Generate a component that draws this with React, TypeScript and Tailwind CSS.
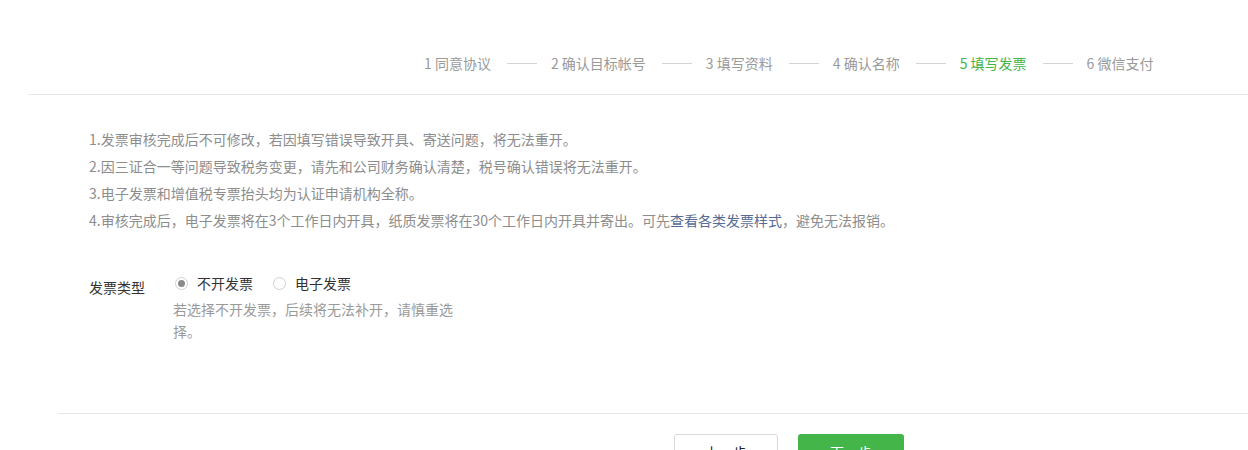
import React from "react";

const steps = [
  { n: 1, t: "同意协议" },
  { n: 2, t: "确认目标帐号" },
  { n: 3, t: "填写资料" },
  { n: 4, t: "确认名称" },
  { n: 5, t: "填写发票", active: true },
  { n: 6, t: "微信支付" },
];

function Radio({ checked, label }: { checked?: boolean; label: string }) {
  return (
    <label className="flex items-center">
      <span className="w-[13px] h-[13px] rounded-full border border-[#d0d0d0] bg-white flex items-center justify-center">
        {checked && <span className="w-[7px] h-[7px] rounded-full bg-[#8a8a8a]" />}
      </span>
      <span className="ml-[9px] text-[#333]">{label}</span>
    </label>
  );
}

export default function App() {
  return (
    <div
      className="w-[1248px] h-[450px] overflow-hidden bg-white text-[14px]"
      style={{ fontFamily: '"Noto Sans CJK SC", "Liberation Sans", sans-serif' }}
    >
      <div className="pl-[28px]">
        <div className="h-[95px] border-b border-[#e7e7eb] pl-[396px] pt-[53px]">
          <div className="flex items-center leading-[20px]">
            {steps.map((s, i) => (
              <div key={s.n} className="flex items-center">
                <span className={s.active ? "text-[#44b549]" : "text-[#9a9a9a]"}>
                  {s.n} {s.t}
                </span>
                {i < steps.length - 1 && (
                  <span className="ml-[16px] mr-[14px] w-[30px] h-px bg-[#d5d5d5]" />
                )}
              </div>
            ))}
          </div>
        </div>
      </div>

      <div className="pl-[89px] pt-[31px] text-[#8d8d8d] leading-[27px]">
        <p>1.发票审核完成后不可修改，若因填写错误导致开具、寄送问题，将无法重开。</p>
        <p>2.因三证合一等问题导致税务变更，请先和公司财务确认清楚，税号确认错误将无法重开。</p>
        <p>3.电子发票和增值税专票抬头均为认证申请机构全称。</p>
        <p>
          4.审核完成后，电子发票将在3个工作日内开具，纸质发票将在30个工作日内开具并寄出。可先
          <a className="text-[#576b95]">查看各类发票样式</a>，避免无法报销。
        </p>
      </div>

      <div className="pl-[89px] mt-[38px] flex leading-[22px]">
        <div className="w-[84px] pt-[4px] text-[#333]">发票类型</div>
        <div>
          <div className="flex items-center gap-[20px] pl-[2px]">
            <Radio checked label="不开发票" />
            <Radio label="电子发票" />
          </div>
          <p className="mt-[4px] w-[284px] text-[#9a9a9a]">
            若选择不开发票，后续将无法补开，请慎重选择。
          </p>
        </div>
      </div>

      <div className="ml-[58px] mt-[71px] border-t border-[#e7e7eb]" />

      <div className="flex pl-[674px] pt-[20px] gap-[20px]">
        <button className="w-[104px] h-[36px] rounded-[3px] border border-[#d9dadc] bg-white text-[#222] text-[14px]">
          上一步
        </button>
        <button className="w-[106px] h-[36px] rounded-[3px] bg-[#44b549] text-white text-[14px]">
          下一步
        </button>
      </div>
    </div>
  );
}
